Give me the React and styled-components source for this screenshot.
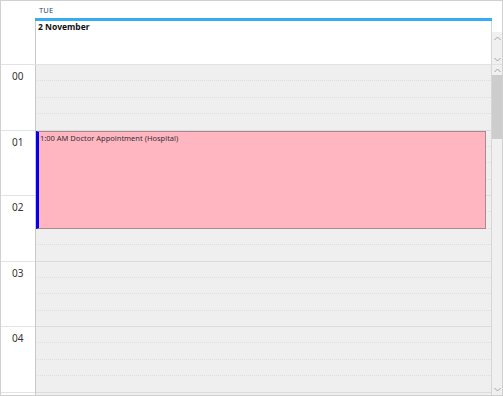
import React from "react";
import styled, { createGlobalStyle } from "styled-components";

const GlobalStyle = createGlobalStyle`
  html, body {
    margin: 0;
    padding: 0;
    background: #fff;
  }
  body {
    font-family: "Noto Sans", "Open Sans", "Liberation Sans", sans-serif;
  }
`;

const HOUR_HEIGHT = 65.5;
const HOURS = ["00", "01", "02", "03", "04", "05"];

const Frame = styled.div`
  width: 503px;
  height: 396px;
  box-sizing: border-box;
  border: 1px solid #d0d0d0;
  display: flex;
  flex-direction: column;
  overflow: hidden;
  background: #fff;
`;

const Header = styled.div`
  display: flex;
  height: 64px;
  flex-shrink: 0;
  box-sizing: border-box;
  border-bottom: 1px solid #e2e2e2;
`;

const Gutter = styled.div`
  width: 34px;
  flex-shrink: 0;
  background: #fff;
`;

const DayHeader = styled.div`
  flex: 1;
  display: flex;
  flex-direction: column;
`;

const DayName = styled.div`
  height: 17px;
  box-sizing: border-box;
  padding: 5px 0 0 4px;
  font-size: 7.5px;
  line-height: 9px;
  color: #1a4a78;
  letter-spacing: 0.2px;
`;

const TodayBar = styled.div`
  height: 3px;
  background: #36acf3;
`;

const DayBox = styled.div`
  flex: 1;
  border-left: 1px solid #c9c9c9;
  border-right: 1px solid #d6d6d6;
  padding: 0 2px;
  font-size: 8.5px;
  line-height: 12px;
  font-weight: 700;
  color: #111;
`;

const ScrollCol = styled.div`
  width: 10px;
  flex-shrink: 0;
  display: flex;
  flex-direction: column;
`;

const Track = styled.div`
  flex: ${(p) => (p.$grow ? 1 : "none")};
  height: ${(p) => (p.$h ? `${p.$h}px` : "auto")};
  background: #f0f0f0;
  display: flex;
  flex-direction: column;
  align-items: center;
  justify-content: space-between;
  padding: ${(p) => p.$pad || "3px 0"};
  box-sizing: border-box;
`;

const Thumb = styled.div`
  width: 10px;
  height: 64px;
  background: #cdcdcd;
  margin-top: 2px;
`;

const Spacer = styled.div`
  flex: 1;
`;

const Body = styled.div`
  flex: 1;
  display: flex;
  overflow: hidden;
`;

const HourLabel = styled.div`
  height: ${HOUR_HEIGHT}px;
  box-sizing: border-box;
  border-bottom: 1px solid #e3e3e3;
  padding: 5px 0 0 11px;
  font-size: 10px;
  line-height: 12px;
  color: #333;
`;

const DayColumn = styled.div`
  flex: 1;
  position: relative;
  background: #efefef;
  border-left: 1px solid #c9c9c9;
  border-right: 1px solid #d6d6d6;
`;

const Quarter = styled.div`
  height: ${HOUR_HEIGHT / 4}px;
  box-sizing: border-box;
  border-bottom: 1px ${(p) => (p.$hour ? "solid #dcdcdc" : "dotted #dedede")};
`;

const Event = styled.div`
  position: absolute;
  left: 0;
  top: 66px;
  width: 450px;
  height: 98px;
  box-sizing: border-box;
  background: #ffb6c1;
  border: 1px solid #a98890;
  border-left: 3px solid #0000ee;
  padding: 1px 0 0 1px;
  font-size: 7.5px;
  line-height: 10px;
  color: #333;
`;

const Arrow = ({ up }) => (
  <svg width="7" height="5" viewBox="0 0 7 5">
    <polyline
      points={up ? "0.5,4 3.5,1 6.5,4" : "0.5,1 3.5,4 6.5,1"}
      fill="none"
      stroke="#a3a3a3"
      strokeWidth="1"
    />
  </svg>
);

export default function App() {
  return (
    <>
      <GlobalStyle />
      <Frame>
        <Header>
          <Gutter />
          <DayHeader>
            <DayName>TUE</DayName>
            <TodayBar />
            <DayBox>2 November</DayBox>
          </DayHeader>
          <ScrollCol>
            <Spacer />
            <Track $h={32} $pad="4px 0 2px">
              <Arrow up />
              <Arrow />
            </Track>
          </ScrollCol>
        </Header>
        <Body>
          <Gutter>
            {HOURS.map((h, i) => (
              <HourLabel key={h}>{i < 5 ? h : ""}</HourLabel>
            ))}
          </Gutter>
          <DayColumn>
            {HOURS.map((h) => (
              <React.Fragment key={h}>
                <Quarter />
                <Quarter />
                <Quarter />
                <Quarter $hour />
              </React.Fragment>
            ))}
            <Event>1:00 AM Doctor Appointment (Hospital)</Event>
          </DayColumn>
          <ScrollCol>
            <Track $grow $pad="3px 0 3px">
              <Arrow up />
              <Thumb />
              <Spacer />
              <Arrow />
            </Track>
          </ScrollCol>
        </Body>
      </Frame>
    </>
  );
}
